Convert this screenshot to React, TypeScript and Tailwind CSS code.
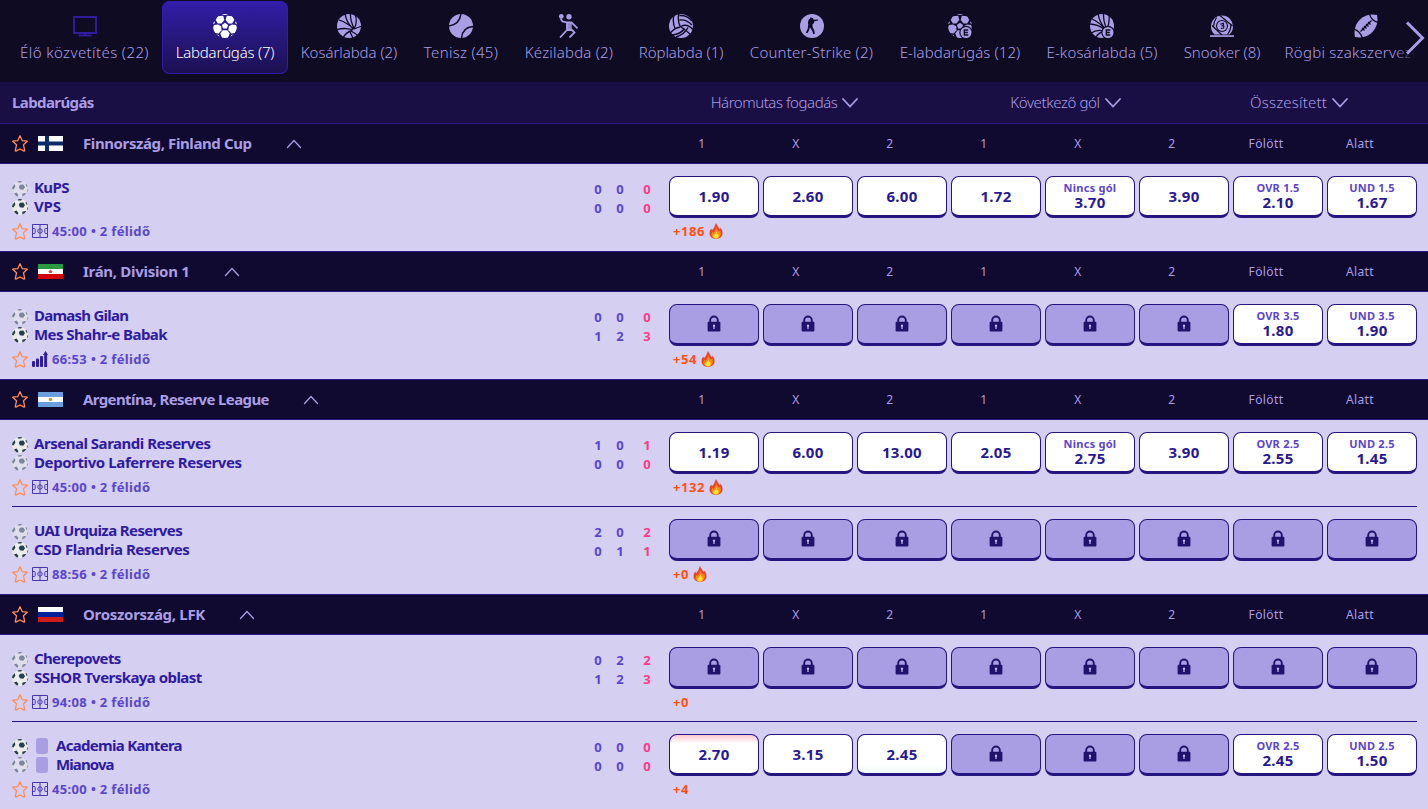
import React from 'react';

type Odd = { value?: string; label?: string; move?: 'up' | 'down' };

interface Team {
  name: string;
  tracking: string;
}

interface Match {
  home: Team;
  away: Team;
  ball: 'home' | 'away';
  cards?: boolean;
  stats?: boolean;
  time: string;
  scores: [number[], number[]];
  odds: Odd[];
  more: string;
  hot?: boolean;
}

interface League {
  name: string;
  tracking: string;
  flag: string;
  matches: Match[];
}

const locked = (n: number): Odd[] => Array.from({ length: n }, () => ({}));

const leagues: League[] = [
  {
    name: 'Finnország, Finland Cup', tracking: 'tracking-[-0.4px]', flag: 'fi',
    matches: [
      {
        home: { name: 'KuPS', tracking: 'tracking-[-0.6px]' }, away: { name: 'VPS', tracking: 'tracking-[-0.2px]' },
        ball: 'away', time: '45:00', scores: [[0, 0, 0], [0, 0, 0]], more: '+186', hot: true,
        odds: [
          { value: '1.90' }, { value: '2.60' }, { value: '6.00' }, { value: '1.72' }, { value: '3.70', label: 'Nincs gól' }, { value: '3.90' },
          { value: '2.10', label: 'OVR 1.5' }, { value: '1.67', label: 'UND 1.5' },
        ],
      },
    ],
  },
  {
    name: 'Irán, Division 1', tracking: 'tracking-[-0.3px]', flag: 'ir',
    matches: [
      {
        home: { name: 'Damash Gilan', tracking: 'tracking-[-0.75px]' }, away: { name: 'Mes Shahr-e Babak', tracking: 'tracking-[-0.55px]' },
        ball: 'away', stats: true, time: '66:53', scores: [[0, 0, 0], [1, 2, 3]], more: '+54', hot: true,
        odds: [...locked(6), { value: '1.80', label: 'OVR 3.5' }, { value: '1.90', label: 'UND 3.5' }],
      },
    ],
  },
  {
    name: 'Argentína, Reserve League', tracking: 'tracking-[-0.6px]', flag: 'ar',
    matches: [
      {
        home: { name: 'Arsenal Sarandi Reserves', tracking: 'tracking-[-0.48px]' }, away: { name: 'Deportivo Laferrere Reserves', tracking: 'tracking-[-0.4px]' },
        ball: 'home', time: '45:00', scores: [[1, 0, 1], [0, 0, 0]], more: '+132', hot: true,
        odds: [
          { value: '1.19' }, { value: '6.00' }, { value: '13.00' }, { value: '2.05' }, { value: '2.75', label: 'Nincs gól' }, { value: '3.90' },
          { value: '2.55', label: 'OVR 2.5' }, { value: '1.45', label: 'UND 2.5' },
        ],
      },
      {
        home: { name: 'UAI Urquiza Reserves', tracking: 'tracking-[-0.6px]' }, away: { name: 'CSD Flandria Reserves', tracking: 'tracking-[-0.45px]' },
        ball: 'away', time: '88:56', scores: [[2, 0, 2], [0, 1, 1]], more: '+0', hot: true,
        odds: locked(8),
      },
    ],
  },
  {
    name: 'Oroszország, LFK', tracking: 'tracking-[-0.3px]', flag: 'ru',
    matches: [
      {
        home: { name: 'Cherepovets', tracking: 'tracking-[-0.65px]' }, away: { name: 'SSHOR Tverskaya oblast', tracking: 'tracking-[-0.55px]' },
        ball: 'away', time: '94:08', scores: [[0, 2, 2], [1, 2, 3]], more: '+0',
        odds: locked(8),
      },
      {
        home: { name: 'Academia Kantera', tracking: 'tracking-[-0.7px]' }, away: { name: 'Mianova', tracking: 'tracking-[-0.9px]' },
        ball: 'home', cards: true, time: '45:00', scores: [[0, 0, 0], [0, 0, 0]], more: '+4',
        odds: [
          { value: '2.70', move: 'down' }, { value: '3.15' }, { value: '2.45', move: 'up' }, ...locked(3),
          { value: '2.45', label: 'OVR 2.5' }, { value: '1.50', label: 'UND 2.5' },
        ],
      },
    ],
  },
];

const columns = ['1', 'X', '2', '1', 'X', '2', 'Fölött', 'Alatt'];

const Icon: React.FC<{ children: React.ReactNode }> = ({ children }) => (
  <svg width="24" height="24" viewBox="0 0 24 24" fill="currentColor" className="shrink-0">{children}</svg>
);

const BallPanels = () => (
  <>
    <path d="M12 8.8l3.100 2.300-1.200 3.500h-3.800l-1.200-3.500z" />
    <path d="M4.700 2.300L10.200 1.700 11.300 6 8.500 9.600 4.900 9.500 2.700 6z" />
    <path d="M19.300 2.300L13.800 1.700 12.700 6 15.500 9.600 19.100 9.500 21.300 6z" />
    <path d="M1 11L5 10.400 8.200 12.200 8.500 16.200 5.600 19.400 2 19-.5 15z" />
    <path d="M23 11L19 10.400 15.800 12.200 15.500 16.200 18.400 19.400 22 19 24.500 15z" />
    <path d="M9.700 16.300h4.600l2.500 3.300-2 4.400H9.200l-2-4.400z" />
    <path d="M8.500.6Q12-1 15.500.6l-3.500.5zM0 10.200l.5-4L2 9zM24 10.200l-.5-4L22 9zM3 20.400l2.600.6 1 2zM21 20.400l-2.600.6-1 2z" />
  </>
);

const EBadge = () => (
  <>
    <circle cx="18" cy="18.500" r="6.700" fill="#0f0b23" />
    <circle cx="18" cy="18.500" r="5.500" />
    <path d="M20.300 16h-4v5h4M16.300 18.500h3.500" fill="none" stroke="#0f0b23" strokeWidth="1.300" />
  </>
);

const sportIcons: Record<string, React.ReactNode> = {
  live: (
    <Icon>
      <path d="M1 3h22v16H1zM12 19v2.500M5.500 21.500h13" fill="none" stroke="#2f1b9e" strokeWidth="2" />
    </Icon>
  ),
  soccer: (
    <Icon>
      <clipPath id="soccer"><circle cx="12" cy="12" r="12" /></clipPath>
      <g clipPath="url(#soccer)"><BallPanels /></g>
    </Icon>
  ),
  basketball: (
    <Icon>
      <circle cx="12" cy="12" r="12" />
      <path d="M16 15Q9 8 8-1M17 14.500Q13 6 13.500-1M17 15Q21 8 18 0M17 15Q22 13 25 12M17 15Q9 8 2 6M16 16Q7 13-1 16M15 16.500Q9 18 6 24M14 17l8 5M13 18l3 6" fill="none" stroke="#0f0b23" strokeWidth="1.300" />
    </Icon>
  ),
  tennis: (
    <Icon>
      <circle cx="12" cy="12" r="12" />
      <path d="M-1 12Q11 11 12-1M25 12.500Q13 13 12.500 25" fill="none" stroke="#0f0b23" strokeWidth="1.500" />
    </Icon>
  ),
  handball: (
    <Icon>
      <circle cx="4.300" cy="2.400" r="2.400" />
      <circle cx="12" cy="2.800" r="2.700" />
      <path d="M9.500 8h5.300v8H9.500z" fillOpacity=".85" />
      <path d="M3.500 4.500L5.500 7.500l4 .900h5l6 6M10 8.500v7.500L3 23.500M14.500 15.500l3 3-5 5M10 16h4.500" fill="none" stroke="currentColor" strokeWidth="1.800" />
    </Icon>
  ),
  volleyball: (
    <Icon>
      <circle cx="12" cy="12" r="12" />
      <path d="M11.500 13Q8 7 10-1M5 1Q3 8 6.500 15.500M11.500 13Q5 14 1 19.500M10.500 6Q17 5 23 11M10.500 1.500Q18 1 23 7M12 12.500Q18 9 24.500 16M12 13Q17 16 22 21M19 13.500Q16 20 7 23M15.500 14.500Q12 20 3 21" fill="none" stroke="#0f0b23" strokeWidth="1.400" />
    </Icon>
  ),
  cs: (
    <Icon>
      <circle cx="12" cy="12" r="12" />
      <path d="M10 3.600l3 .3.5 1.800 4.500-.2v1l-3.500.8-.8 2.200-1.200.5.2 3.500 1.600 3 .5 3.500h-1.600l-.9-3-2.400-3.700-.8 3-1.500 2.700-1.700-.1.400-1.200 1.400-3 .6-4.400-.4-1.500.8-3.200 1.500-.8z" fill="#0f0b23" />
    </Icon>
  ),
  esoccer: (
    <Icon>
      <clipPath id="esoccer"><circle cx="12" cy="12" r="12" /></clipPath>
      <g clipPath="url(#esoccer)"><BallPanels /></g>
      <EBadge />
    </Icon>
  ),
  ebasketball: (
    <Icon>
      <circle cx="12" cy="12" r="12" />
      <path d="M16 16Q9 8 8-1M16 14Q13 6 13.500-1M17 15Q20 8 19 0M16 16Q9 8 2 5M14 15Q7 10-1 10M14 17Q7 15 1 19M14 18Q9 18 6 23" fill="none" stroke="#0f0b23" strokeWidth="1.300" />
      <EBadge />
    </Icon>
  ),
  snooker: (
    <Icon>
      <path d="M4.500 20.500A11 11 0 1119.500 20.500z" />
      <path d="M2 11.500L12 21M6.500 3.500Q4 7 3.500 13M22.500 12L10 1.500M17.500 20.500Q21 16 21 10" fill="none" stroke="#0f0b23" strokeWidth="1.200" />
      <circle cx="12" cy="12" r="6" fill="#0f0b23" />
      <circle cx="12" cy="12" r="4.900" />
      <path d="M10.300 10.300l3-1 .2 1.700-1.300.8 1.800.4-.5 1.900-2.600.4" fill="none" stroke="#0f0b23" strokeWidth="1.100" />
      <path d="M0 21.200h24v1.700H0z" />
    </Icon>
  ),
  rugby: (
    <Icon>
      <path d="M1 23Q-1 12 6 5.500T23 1Q25 11 18.500 18T1 23z" />
      <path d="M6.500 17.500l11-11M8 14l2.500 2.500M10 12l2.500 2.500M12 10l2.500 2.500M14 8l2.500 2.500M0 15Q6 17 8.500 24M15.500 0Q17 6 24 8.500" fill="none" stroke="#0f0b23" strokeWidth="1.300" />
    </Icon>
  ),
};

const sports = [
  { icon: 'live', name: 'Élő közvetítés (22)', style: 'w-[155px] tracking-[0.4px]' },
  { icon: 'soccer', name: 'Labdarúgás (7)', style: 'w-[126px] tracking-[-0.2px]', active: true },
  { icon: 'basketball', name: 'Kosárlabda (2)', style: 'w-[122px] tracking-[-0.05px]' },
  { icon: 'tennis', name: 'Tenisz (45)', style: 'w-[102px] tracking-[0.3px]' },
  { icon: 'handball', name: 'Kézilabda (2)', style: 'w-[114px] tracking-[0.2px]' },
  { icon: 'volleyball', name: 'Röplabda (1)', style: 'w-[110px] tracking-[-0.05px]' },
  { icon: 'cs', name: 'Counter-Strike (2)', style: 'w-[151px] tracking-[0.22px]' },
  { icon: 'esoccer', name: 'E-labdarúgás (12)', style: 'w-[146px] tracking-[0.1px]' },
  { icon: 'ebasketball', name: 'E-kosárlabda (5)', style: 'w-[138px] tracking-[0.15px]' },
  { icon: 'snooker', name: 'Snooker (8)', style: 'w-[102px] tracking-[-0.05px]' },
  { icon: 'rugby', name: 'Rögbi szakszervezet (1)', style: 'w-[186px] tracking-[0.25px]' },
];

const Star = () => (
  <svg width="16" height="17" viewBox="0 0 16 17" fill="none" stroke="#ff8f56" strokeWidth="1.300" strokeLinejoin="round" className="shrink-0">
    <path d="M8 .8l2.200 4.800 5.100.6-3.800 3.600 1.200 5.800q-.3.600-1 .3L8 14l-3.700 1.900q-.7.300-1-.3l1.200-5.800L.7 6.200l5.100-.6z" />
  </svg>
);

const Flag: React.FC<{ code: string }> = ({ code }) => (
  <svg width="25" height="15" viewBox="0 0 25 15" className="shrink-0">
    <rect width="25" height="15" fill="#fff" />
    {code === 'fi' && <path d="M0 5.500h25v4H0zM7 0h4v15H7z" fill="#0b2a66" />}
    {code === 'ir' && (
      <>
        <path d="M0 0h25v5H0z" fill="#2b9a3e" />
        <path d="M0 10h25v5H0z" fill="#d3020a" />
        <path d="M12.500 5.700l2 1.500-.7 1.800h-2.600l-.7-1.800z" fill="#e34a50" />
      </>
    )}
    {code === 'ar' && (
      <>
        <path d="M0 0h25v5H0zM0 10h25v5H0z" fill="#689fdc" />
        <circle cx="12.500" cy="7.500" r="1.800" fill="#d18f2c" />
      </>
    )}
    {code === 'ru' && (
      <>
        <path d="M0 5h25v5H0z" fill="#01209c" />
        <path d="M0 10h25v5H0z" fill="#d01c17" />
      </>
    )}
  </svg>
);

const TeamBall: React.FC<{ dim: boolean }> = ({ dim }) => (
  <svg width="16" height="16" viewBox="0 0 16 16" className={dim ? 'shrink-0 opacity-50' : 'shrink-0'}>
    <circle cx="8" cy="8" r="7.900" fill="#ececea" />
    <g fill="#263f4b">
      <path d="M8 3.800l3.300-.3 1.700 2.700-1.800 2.600-3.400-.5-1-2.500z" />
      <path d="M5.500.5Q8-.5 10.500.5L9 1.500 6 1.600zM.4 5.800L2.800 3l.5 2.700L1.500 8.500.1 8zM1.900 12.500l2.600-1 1.800 2.300L6 15.500Q3.500 15 1.900 12.500zM10.200 12.800l2.900-.8 1.200.3Q12.800 14.800 10.400 15.600zM14.200 2.800l1.200 2.500-.4.900-1.500-2.500zM15 9l.9-1q-.1 2-1 3.500z" />
    </g>
  </svg>
);

const Pitch = () => (
  <svg width="16" height="14" viewBox="0 0 16 14" fill="none" stroke="#4a35b4" className="shrink-0">
    <path d="M.5.5h15v13H.5zM8 .5v13" />
    <path d="M.5 4.500h1.700q1 0 1 1v3q0 1-1 1H.5M15.500 4.500h-1.700q-1 0-1 1v3q0 1 1 1h1.700" />
    <circle cx="8" cy="7" r="2.200" />
  </svg>
);

const Stats = () => (
  <svg width="16" height="16" viewBox="0 0 16 16" fill="#2f1b9e" className="shrink-0">
    <rect y="10" width="3" height="6" rx="1" />
    <rect x="4" y="7.500" width="3" height="8.500" rx="1" />
    <rect x="8" y="5" width="3" height="11" rx="1" />
    <path d="M12.200 16V4H11l2.600-4L16 4h-.9v12z" />
  </svg>
);

const Flame = () => (
  <svg width="14" height="16" viewBox="0 0 14 16">
    <path d="M6.800 0Q8 2 9.800 4.800L11 6.200l.6-1.700Q14 8 13.600 11 12.500 15.800 7 16 1.500 15.800.5 11 .2 8 2.200 5.500l.9 1.700Q6 4 6.800 0z" fill="#e8452b" />
    <path d="M7 3.500q.4 3 2.800 5l1.600-.8q.8 3-.2 5Q9.800 15.500 7 15.700 4 15.500 2.700 13q-.6-2.500.6-4l1.300 1Q7 7.500 7 3.500z" fill="#f58a1f" />
    <path d="M7.300 8.500Q8 10.500 9.700 12q.3 3-2.700 3.600-3-.6-2.600-3.400l1.300-1Q7.200 10.200 7.300 8.500z" fill="#fde32c" />
  </svg>
);

const Lock = () => (
  <svg width="14" height="17" viewBox="0 0 14 17">
    <path d="M3.200 7V5.300a3.800 3.800 0 017.600 0V7" fill="none" stroke="#21136c" strokeWidth="1.900" />
    <rect x=".6" y="6.700" width="12.800" height="9.800" rx="1" fill="#21136c" />
    <path d="M7 9.600a1.200 1.200 0 01.6 2.200v2.300H6.400v-2.300A1.200 1.200 0 017 9.600z" fill="#c9bff5" />
  </svg>
);

const OddButton: React.FC<{ odd: Odd }> = ({ odd }) => {
  const base = 'flex h-[42px] w-[90px] flex-col items-center justify-center rounded-lg border border-b-3 border-[#251580]';
  if (!odd.value) {
    return <button className={`${base} bg-[#a99ee4] pb-px`}><Lock /></button>;
  }
  let bg = 'bg-white';
  if (odd.move === 'down') bg = 'bg-linear-to-b from-[#ffc6d4] to-white to-22%';
  if (odd.move === 'up') bg = 'bg-linear-to-t from-[#effaf7] to-white to-22%';
  return (
    <button className={`${base} ${bg}`}>
      {odd.label && <span className="-mt-px text-[11px] leading-[14px] font-bold tracking-[0.25px] text-[#5b46c9]">{odd.label}</span>}
      <span className={`text-[15px] font-bold tracking-[0.3px] text-[#2a1893] ${odd.label ? 'leading-[15px]' : 'leading-4'}`}>{odd.value}</span>
    </button>
  );
};

const MatchRow: React.FC<{ match: Match; divider: boolean }> = ({ match, divider }) => (
  <div className="h-[87px] px-3">
    <div className={`flex h-full w-[1405px] ${divider ? 'border-b border-[#251580]' : ''}`}>
      <div className="w-[576px] shrink-0 pt-3.5">
        {[match.home, match.away].map((team, i) => (
          <div key={team.name} className="flex h-[19px] items-center text-[15px] leading-[19px] font-bold text-[#2f1b9e]">
            <div className={i === 0 ? 'pt-0.5' : ''}><TeamBall dim={(i === 0) !== (match.ball === 'home')} /></div>
            {match.cards && <span className="ml-2 h-4 w-3 rounded-[3px] bg-[#a99ee4]" />}
            <span className={`${match.cards ? 'ml-2' : 'ml-1.5'} ${team.tracking}`}>{team.name}</span>
          </div>
        ))}
        <div className="mt-1.5 flex h-[18px] items-center gap-1 text-[13px] font-bold tracking-[0.35px] text-[#5b46c9]">
          <Star />
          {match.stats ? <Stats /> : <Pitch />}
          <span className="pt-px">{match.time} • 2 félidő</span>
        </div>
      </div>
      <div className="w-[81px] shrink-0 pt-4">
        {match.scores.map((row, i) => (
          <div key={i} className="flex h-[19px] items-center text-[13px] font-bold text-[#5b46c9]">
            <span className="w-5 text-center">{row[0]}</span>
            <span className="w-6 text-center">{row[1]}</span>
            <span className="w-[30px] text-center text-[#ff3a88]">{row[2]}</span>
          </div>
        ))}
      </div>
      <div className="shrink-0 pt-3">
        <div className="flex gap-1">
          {match.odds.map((odd, i) => <OddButton key={i} odd={odd} />)}
        </div>
        <div className="mt-1 ml-1 flex h-[18px] items-center gap-1 text-[13px] font-bold tracking-[0.6px] text-[#ff5010]">
          <span className="pt-px">{match.more}</span>
          {match.hot && <Flame />}
        </div>
      </div>
    </div>
  </div>
);

const Chevron: React.FC<{ up?: boolean }> = ({ up }) => (
  <svg width="16" height="10" viewBox="0 0 16 10" fill="none" stroke="#a99ee4" strokeWidth={up ? 1.3 : 1.8} strokeLinecap="round">
    <path d={up ? 'M1.500 8.500L8 1.500l6.500 7' : 'M1 1l7 7.500L15 1'} />
  </svg>
);

const markets = [
  { name: 'Háromutas fogadás', style: 'w-[283px] tracking-[-0.45px]' },
  { name: 'Következő gól', style: 'w-[279px] tracking-[-0.38px]' },
  { name: 'Összesített', style: 'w-[188px] tracking-[0.18px]' },
];

export default function App() {
  return (
    <div className="h-[809px] w-[1428px] overflow-hidden bg-[#d5cff2] font-['Noto_Sans',sans-serif]">
      <div className="relative flex h-[82px] overflow-hidden bg-[#0f0b23] pt-px pl-[7px]">
        {sports.map((sport) => (
          <div
            key={sport.name}
            className={`flex h-[73px] shrink-0 flex-col items-center pt-[13px] ${sport.style} ${
              sport.active ? 'rounded-lg bg-linear-to-b from-[#321daa] to-[#1c1050] text-white inset-ring inset-ring-[#321daa]' : 'text-[#a99ee4]'
            }`}
          >
            {sportIcons[sport.icon]}
            <span className="mt-1 text-[15px] leading-5 font-light whitespace-nowrap">{sport.name}</span>
          </div>
        ))}
        <div className="absolute inset-y-0 right-0 w-8 bg-linear-to-r from-transparent to-[#0f0b23] to-60%" />
        <svg width="20" height="34" viewBox="0 0 20 34" fill="none" stroke="#a99ee4" strokeWidth="3" className="absolute top-[21px] right-[3px]">
          <path d="M2 1.500L17.500 17 2 32.500" />
        </svg>
      </div>

      <div className="flex h-[41px] items-center bg-[#190f45] text-[15px] text-[#a99ee4]">
        <div className="w-[643px] pl-3 font-bold tracking-[-0.6px]">Labdarúgás</div>
        {markets.map((market) => (
          <div key={market.name} className={`flex items-center justify-center gap-[5px] font-light ${market.style}`}>
            {market.name}
            <Chevron />
          </div>
        ))}
      </div>

      {leagues.map((league) => (
        <div key={league.name}>
          <div className="flex h-[41px] items-center border-y border-[#2b1a85] bg-[#110a30] text-[#a99ee4]">
            <div className="flex w-[657px] items-center pl-3">
              <Star />
              <div className="ml-2.5"><Flag code={league.flag} /></div>
              <span className={`mr-[34px] ml-5 text-[15px] font-bold ${league.tracking}`}>{league.name}</span>
              <Chevron up />
            </div>
            {columns.map((col, i) => (
              <span key={i} className="mr-1 w-[90px] text-center text-xs tracking-[0.4px]">{col}</span>
            ))}
          </div>
          {league.matches.map((match, i) => (
            <MatchRow key={match.home.name} match={match} divider={i < league.matches.length - 1} />
          ))}
        </div>
      ))}
    </div>
  );
}
